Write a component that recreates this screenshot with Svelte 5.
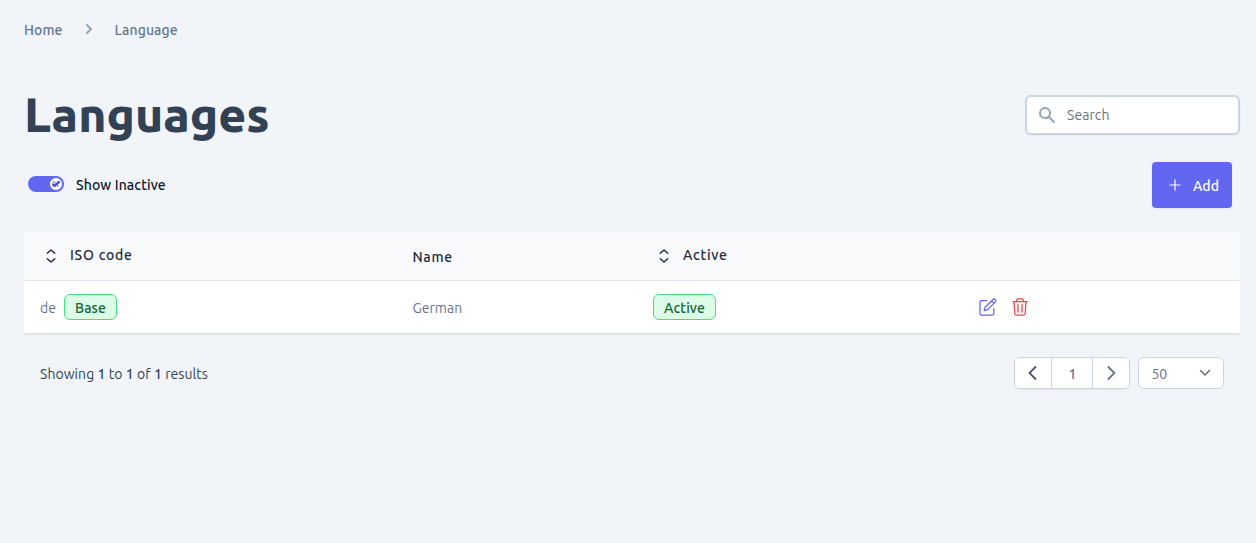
<script>
  const columns = [
    { key: 'iso', label: 'ISO code', sortable: true },
    { key: 'name', label: 'Name', sortable: false },
    { key: 'active', label: 'Active', sortable: true },
    { key: 'actions', label: '', sortable: false }
  ];
  const languages = [{ iso: 'de', base: true, name: 'German', active: true }];
  let showInactive = $state(true);
</script>

<div class="page">
  <nav class="crumbs">
    <span class="home">Home</span>
    <svg width="20" height="20" viewBox="0 0 20 20" fill="#94a3b8"><path fill-rule="evenodd" clip-rule="evenodd" d="M7.293 14.707a1 1 0 010-1.414L10.586 10 7.293 6.707a1 1 0 011.414-1.414l4 4a1 1 0 010 1.414l-4 4a1 1 0 01-1.414 0z" /></svg>
    <span>Language</span>
  </nav>

  <header>
    <h1>Languages</h1>
    <label class="search">
      <svg width="20" height="20" viewBox="0 0 20 20" fill="#94a3b8"><path fill-rule="evenodd" clip-rule="evenodd" d="M8 4a4 4 0 100 8 4 4 0 000-8zM2 8a6 6 0 1110.89 3.476l4.817 4.817a1 1 0 01-1.414 1.414l-4.816-4.816A6 6 0 012 8z" /></svg>
      <input placeholder="Search" />
    </label>
  </header>

  <div class="toolbar">
    <div class="toggle">
      <button class="switch" class:on={showInactive} aria-label="Show Inactive" onclick={() => (showInactive = !showInactive)}>
        <span class="knob">
          <svg width="12" height="12" viewBox="0 0 12 12" fill="none" stroke-linecap="round" stroke-linejoin="round"><path d="M3.4 3.4l4.8 4.8M8.2 3.4L3.4 8.2" stroke="#94a3b8" stroke-width="1.5" /><path d="M2.8 6.2l2 1.8 4.4-4" stroke="#4f46e5" stroke-width="1.9" /></svg>
        </span>
      </button>
      <span class="toggle-label">Show Inactive</span>
    </div>
    <button class="add">
      <svg width="12" height="12" viewBox="0 0 12 12" stroke="#fff" stroke-width="1.15"><path d="M6 .5v11M.5 6h11" /></svg>
      <span>Add</span>
    </button>
  </div>

  <div class="table">
    <div class="row head">
      {#each columns as column (column.key)}
        <div class="cell {column.key}" class:sortable={column.sortable}>
          {#if column.sortable}
            <svg width="10" height="14" viewBox="0 0 10 14" fill="none" stroke="#1e293b" stroke-width="1.4" stroke-linecap="round" stroke-linejoin="round"><path d="M1.3 4.3L5 1l3.7 3.3M1.3 9.7L5 13l3.7-3.3" /></svg>
          {/if}
          <span>{column.label}</span>
        </div>
      {/each}
    </div>
    {#each languages as language (language.iso)}
      <div class="row">
        <div class="cell"><span class="iso-value">{language.iso}</span>{#if language.base}<span class="badge base">Base</span>{/if}</div>
        <div class="cell"><span class="name-value">{language.name}</span></div>
        <div class="cell"><span class="badge status">{language.active ? 'Active' : 'Inactive'}</span></div>
        <div class="cell actions">
          <svg width="18" height="18" viewBox="0 0 18 18" fill="none" stroke="#6366f1" stroke-width="1.25" stroke-linecap="round" stroke-linejoin="round"><path d="M7.8 2.7H2.2Q1 2.7 1 3.9v11.9Q1 17 2.2 17h11.4q1.2 0 1.2-1.2v-5.3" /><path d="M6.1 9.2l7.9-7.7q1.1-1 2.3.1 1.1 1.2.1 2.3l-7.8 7.7-3.5 1.1zM12.6 2.9l2.5 2.4" /></svg>
          <svg width="16" height="18" viewBox="0 0 16 18" fill="none" stroke="#ef4444" stroke-width="1.25" stroke-linecap="round" stroke-linejoin="round"><path d="M1 3.5h14M4.7 3.3V2.1Q4.7.8 6 .8h4q1.3 0 1.3 1.3v1.2M2 3.6l.8 12.1q.1 1.5 1.6 1.5h7.2q1.5 0 1.6-1.5L14 3.6M6 6.5v7.6M10 6.5v7.6" /></svg>
        </div>
      </div>
    {/each}
  </div>

  <footer>
    <p>Showing <b>1</b> to <b>1</b> of <b>1</b> results</p>
    <div class="paging">
      <div class="pager">
        <button aria-label="Previous"><svg width="10" height="16" viewBox="0 0 10 16" fill="none" stroke="#475569" stroke-width="1.8"><path d="M8 1.5L1.5 8 8 14.5" /></svg></button>
        <button class="number">1</button>
        <button aria-label="Next"><svg width="10" height="16" viewBox="0 0 10 16" fill="none" stroke="#64748b" stroke-width="1.8"><path d="M1.9 1.5L8.4 8l-6.5 6.5" /></svg></button>
      </div>
      <button class="size"><span>50</span><svg width="12" height="8" viewBox="0 0 12 8" fill="none" stroke="#6b7280" stroke-width="1.6" stroke-linecap="round" stroke-linejoin="round"><path d="M1.5 1.5L6 6l4.5-4.5" /></svg></button>
    </div>
  </footer>
</div>

<style>
  :global(body) { background: #f1f5f9; }
  .page { box-sizing: border-box; height: 543px; padding: 20px 16px 0 24px; background: #f1f5f9; color: #334155; font: 14px/20px Ubuntu, 'Noto Sans', sans-serif; }
  svg { display: block; flex: none; }
  button { box-sizing: border-box; margin: 0; padding: 0; font: inherit; color: inherit; }
  .crumbs { display: flex; height: 20px; color: #64748b; font-weight: 500; letter-spacing: .1px; }
  .crumbs svg { margin: -1px 16px 0; }
  .home { width: 38.5px; }
  header { display: flex; justify-content: space-between; align-items: center; height: 60px; margin-top: 45px; }
  h1 { margin: -2px 0 0; font-size: 48px; line-height: 60px; font-weight: 800; }
  .search { box-sizing: border-box; display: flex; align-items: center; width: 215px; height: 40px; padding-left: 10px; border: 2px solid #cbd5e1; border-radius: 6px; background: #fff; box-shadow: 0 1px 2px #0000000d; }
  .search input { flex: 1; min-width: 0; margin-left: 10px; padding: 0; border: 0; outline: 0; background: none; font: inherit; letter-spacing: .08px; }
  .search input::placeholder { color: #6b7280; opacity: 1; }
  .toolbar { display: flex; justify-content: space-between; height: 46px; margin: 17px 8px 0 4px; }
  .toggle { display: flex; align-items: center; height: 44px; }
  .switch { display: flex; align-items: center; width: 36px; height: 16px; padding: 0 2px; border: 0; border-radius: 8px; background: #cbd5e1; }
  .switch.on { justify-content: flex-end; background: #6366f1; }
  .knob { width: 12px; height: 12px; border-radius: 50%; background: #fff; }
  .toggle-label { margin: 2px 0 0 12px; color: #0f172a; font-weight: 500; letter-spacing: .12px; }
  .add { display: flex; align-items: center; width: 80px; height: 46px; padding-left: 17px; border: 0; border-radius: 4px; background: #6366f1; color: #fff; font-weight: 500; box-shadow: 0 1px 2px #0000000d; }
  .add span { margin: 2px 0 0 12px; }
  .table { margin-top: 24px; background: #fff; box-shadow: 0 1px 3px #0000001a, 0 1px 2px -1px #0000001a; clip-path: inset(-6px 0); }
  .row { display: grid; grid-template-columns: 372px 241px 325px 1fr; height: 52px; }
  .head { height: 48px; border-bottom: 1px solid #e2e8f0; background: #f8fafc; font-weight: 500; letter-spacing: .75px; }
  .cell { display: flex; align-items: center; padding-left: 16px; color: #64748b; }
  .head .cell { color: #1e293b; padding-top: 2px; }
  .head .name { padding-left: 16.4px; }
  .head .sortable { padding: 0 0 2px 22px; }
  .sortable svg { margin-top: 2px; }
  .sortable span { margin-left: 14px; }
  .iso-value { width: 16px; margin: 2px 8px 0 0; }
  .name-value { margin: 2px 0 0 .4px; letter-spacing: .05px; }
  .badge { box-sizing: border-box; display: flex; justify-content: center; align-items: center; height: 26px; padding-top: 2px; border: 1px solid #4ade80; border-radius: 6px; background: #dcfce7; color: #166534; font-weight: 500; letter-spacing: .1px; }
  .base { width: 53px; }
  .status { width: 63px; }
  .row > .actions { gap: 14.7px; padding-left: 17.3px; }
  footer { display: flex; justify-content: space-between; align-items: center; height: 32px; margin-top: 24px; padding: 0 16px; }
  p { margin: 2px 0 0; letter-spacing: .06px; }
  b { font-weight: 500; }
  .paging { display: flex; gap: 8px; }
  .pager, .size { box-sizing: border-box; display: flex; height: 32px; overflow: hidden; border: 1px solid #cbd5e1; border-radius: 6px; background: #fff; box-shadow: 0 1px 2px #0000000d; }
  .pager button { display: flex; align-items: center; justify-content: center; width: 36px; border: 0; background: #fff; }
  .pager .number { width: 42px; padding: 2px 0 0 1px; border: solid #cbd5e1; border-width: 0 1px; color: #64748b; font-weight: 500; }
  .size { align-items: center; justify-content: space-between; width: 86px; padding: 0 12px; color: #64748b; box-shadow: none; }
  .size span { margin: 2px 0 0 .4px; }
</style>
